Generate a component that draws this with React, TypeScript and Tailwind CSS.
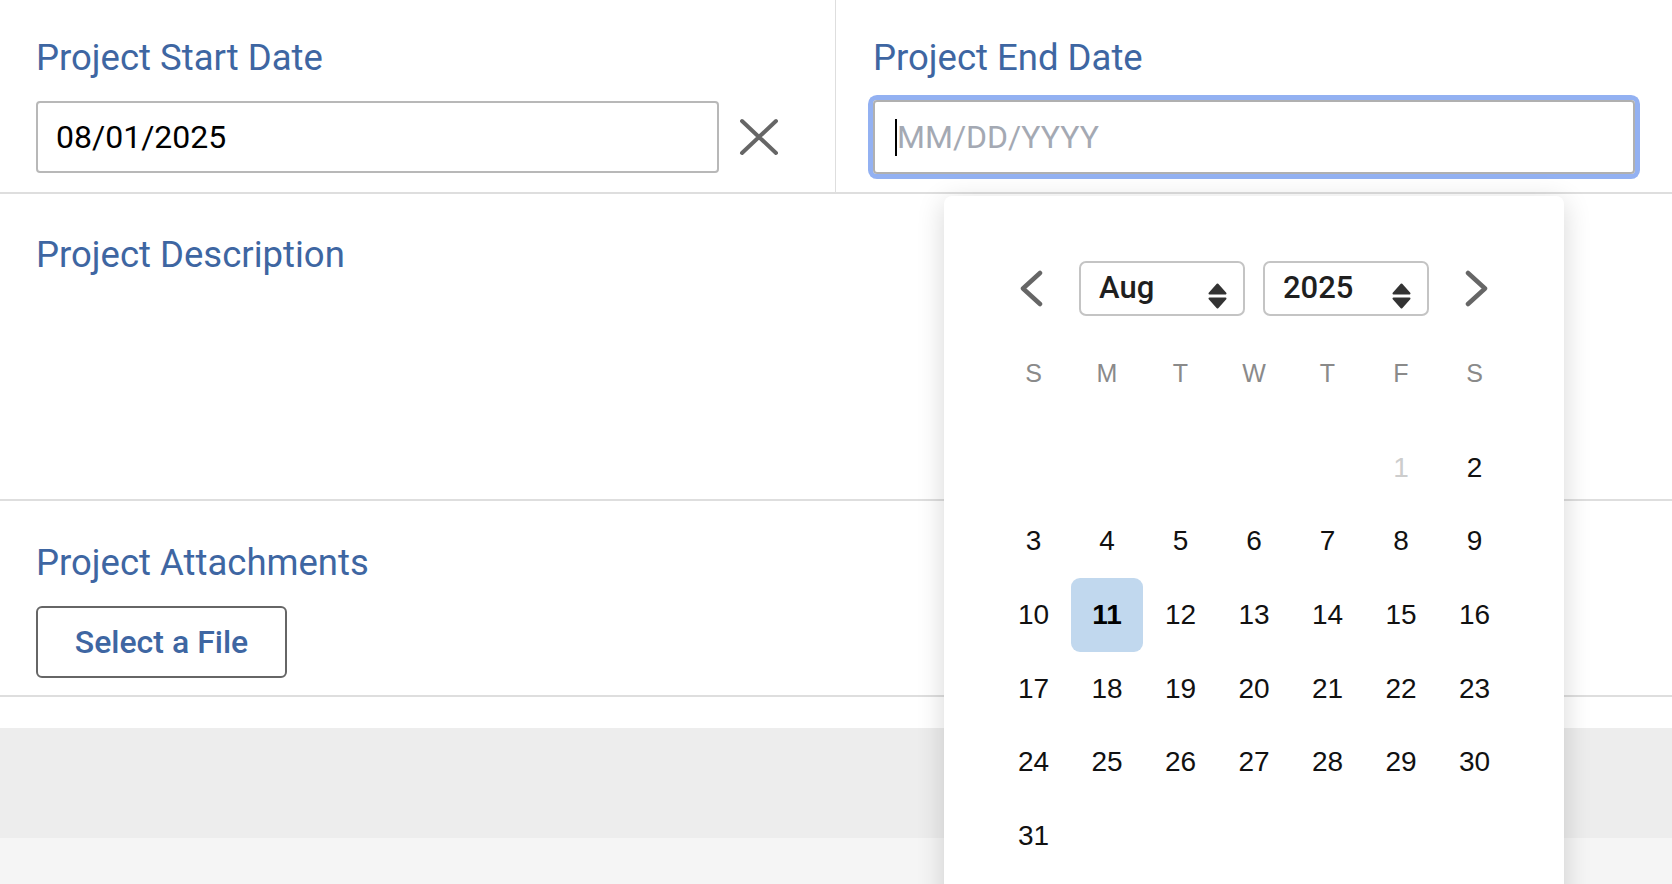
import React from "react";

const weeks: (number | null)[][] = [
  [null, null, null, null, null, 1, 2],
  [3, 4, 5, 6, 7, 8, 9],
  [10, 11, 12, 13, 14, 15, 16],
  [17, 18, 19, 20, 21, 22, 23],
  [24, 25, 26, 27, 28, 29, 30],
  [31, null, null, null, null, null, null],
];

function UpDown() {
  return (
    <svg width="19" height="26" viewBox="0 0 19 26" className="mt-[15px] shrink-0">
      <path d="M9.5 1.5 L17.5 10.5 L1.5 10.5 Z" fill="#333" stroke="#333" strokeWidth="2" strokeLinejoin="round" />
      <path d="M1.5 15.5 L17.5 15.5 L9.5 24.5 Z" fill="#333" stroke="#333" strokeWidth="2" strokeLinejoin="round" />
    </svg>
  );
}

function Select({ value }: { value: string }) {
  return (
    <div className="flex h-[55px] w-[166px] items-center justify-between rounded-[7px] border-2 border-[#c4c4c4] pl-[18px] pr-[16px]">
      <span className="font-['Roboto'] text-[31px] font-medium text-[#1f1f1f]">{value}</span>
      <UpDown />
    </div>
  );
}

export default function App() {
  return (
    <div className="relative h-[884px] w-[1672px] overflow-hidden bg-white font-['Roboto',sans-serif]">
      {/* top row */}
      <div className="flex h-[194px] border-b-2 border-[#dedede]">
        <div className="w-[836px] border-r border-[#dedede] pl-[36px] pt-[34px]">
          <div className="text-[36.5px] leading-[48px] text-[#3e66a2]">Project Start Date</div>
          <div className="mt-[19px] flex items-center">
            <div className="flex h-[72px] w-[683px] items-center rounded-[4px] border-2 border-[#b8b8b8] px-[18px] text-[32px] text-black">
              08/01/2025
            </div>
            <div className="flex w-[80px] justify-center">
              <svg width="40" height="38" viewBox="0 0 40 38">
                <path d="M3 3 L37 35 M37 3 L3 35" stroke="#666" strokeWidth="4" strokeLinecap="round" />
              </svg>
            </div>
          </div>
        </div>
        <div className="flex-1 pl-[37px] pr-[37px] pt-[34px]">
          <div className="text-[36.5px] leading-[48px] text-[#3e66a2]">Project End Date</div>
          <div className="mt-[18px] flex h-[74px] items-center rounded-[4px] border-2 border-[#b0b0b0] px-[20px] shadow-[0_0_0_5px_#93b1f2]">
            <span className="h-[37px] w-[2px] bg-black" />
            <span className="text-[32px] text-[#a4a9b3]">MM/DD/YYYY</span>
          </div>
        </div>
      </div>

      {/* description */}
      <div className="h-[307px] border-b-2 border-[#dedede] pl-[36px] pt-[37px]">
        <div className="text-[36.5px] leading-[48px] text-[#3e66a2]">Project Description</div>
      </div>

      {/* attachments */}
      <div className="h-[196px] border-b-2 border-[#dedede] pl-[36px] pt-[38px]">
        <div className="text-[36.5px] leading-[48px] text-[#3e66a2]">Project Attachments</div>
        <button className="mt-[19px] flex h-[72px] w-[251px] items-center justify-center rounded-[6px] border-2 border-[#666] text-[32px] font-medium text-[#3e66a2]">
          Select a File
        </button>
      </div>

      <div className="h-[31px] bg-white" />
      <div className="h-[110px] bg-[#ededed]" />
      <div className="h-[60px] bg-[#f5f5f5]" />

      {/* calendar popover */}
      <div className="absolute left-[944px] top-[196px] h-[720px] w-[620px] rounded-[8px] bg-white pt-[65px] shadow-[0_6px_28px_rgba(0,0,0,0.16)]">
        <div className="flex items-center justify-center">
          <svg width="26" height="37" viewBox="0 0 26 37" className="mr-[35px]">
            <path d="M22 3 L5 18.5 L22 34" fill="none" stroke="#666" strokeWidth="4.5" strokeLinecap="round" strokeLinejoin="round" />
          </svg>
          <Select value="Aug" />
          <div className="w-[18px]" />
          <Select value="2025" />
          <svg width="26" height="37" viewBox="0 0 26 37" className="ml-[35px]">
            <path d="M4 3 L21 18.5 L4 34" fill="none" stroke="#666" strokeWidth="4.5" strokeLinecap="round" strokeLinejoin="round" />
          </svg>
        </div>

        <div className="mx-auto mt-[21px] w-[514.5px] font-['Liberation_Sans',Arial,sans-serif]">
          <div className="grid h-[74px] grid-cols-7 items-center text-center text-[25px] text-[#8a8a8a]">
            {["S", "M", "T", "W", "T", "F", "S"].map((d, i) => (
              <div key={i}>{d}</div>
            ))}
          </div>
          <div className="mt-[20px]">
            {weeks.map((w, wi) => (
              <div key={wi} className="grid h-[73.6px] grid-cols-7">
                {w.map((d, di) => (
                  <div key={di} className="flex items-center justify-center">
                    {d === null ? null : d === 11 ? (
                      <div className="flex h-[74px] w-[72px] items-center justify-center rounded-[9px] bg-[#c1d8ee] text-[28px] font-bold text-black">
                        11
                      </div>
                    ) : (
                      <span className={d === 1 ? "text-[28px] text-[#cdcdcd]" : "text-[28px] text-[#111]"}>{d}</span>
                    )}
                  </div>
                ))}
              </div>
            ))}
          </div>
        </div>
      </div>
    </div>
  );
}
